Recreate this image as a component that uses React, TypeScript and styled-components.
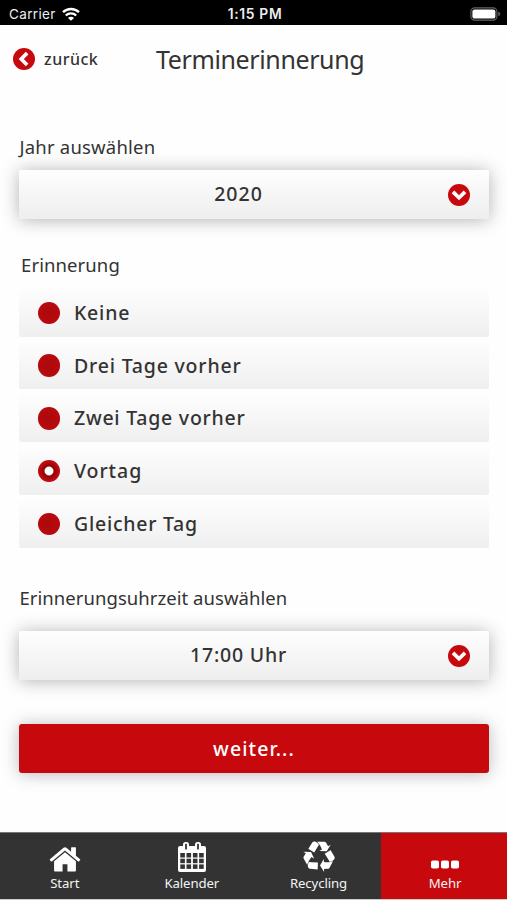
import React from "react";
import styled, { createGlobalStyle } from "styled-components";

const RED = "#c7090e";

const GlobalStyle = createGlobalStyle`
  * { box-sizing: border-box; }
  body { margin: 0; background: #fefefe; }
`;

const Screen = styled.div`
  width: 507px;
  height: 900px;
  display: flex;
  flex-direction: column;
  overflow: hidden;
  background: #fefefe;
  color: #333;
  font-family: "Noto Sans", "Open Sans", sans-serif;
`;

const StatusBar = styled.header`
  height: 25px;
  flex: none;
  display: grid;
  grid-template-columns: 1fr auto 1fr;
  align-items: center;
  padding: 2px 6px 0 9px;
  background: #000;
  color: #eee;
  font-family: Inter, sans-serif;
  font-size: 13.5px;
  line-height: 20px;
`;

const Carrier = styled.div`
  display: flex;
  align-items: center;
  gap: 6px;
  letter-spacing: 0.35px;
`;

const Clock = styled.div`
  font-weight: 600;
  font-size: 13.8px;
  letter-spacing: 0.7px;
`;

const BatterySlot = styled.div`
  display: flex;
  justify-content: flex-end;
`;

const TitleBar = styled.div`
  height: 68px;
  flex: none;
  display: flex;
  align-items: center;
  padding-left: 13px;
`;

const BackButton = styled.button`
  width: 143px;
  display: flex;
  align-items: center;
  gap: 9px;
  padding: 0;
  border: 0;
  background: none;
  color: inherit;
  font: 500 16px/22px "Noto Sans", sans-serif;
  letter-spacing: 0.5px;
`;

const Title = styled.h1`
  margin: 0;
  padding-bottom: 1px;
  font-size: 25px;
  font-weight: 400;
  line-height: 34px;
  letter-spacing: -0.38px;
  white-space: nowrap;
`;

const Content = styled.main`
  flex: 1;
  padding: 41px 18px 0 19px;
`;

const Label = styled.div<{ $space: number }>`
  height: 26px;
  padding-left: 0.5px;
  font-size: 18.5px;
  line-height: 26px;
  letter-spacing: ${(p) => p.$space}px;
  white-space: nowrap;
`;

const GroupLabel = styled(Label)`
  margin-top: 33.5px;
  padding-left: 2px;
`;

const Select = styled.button<{ $top: number; $space: number }>`
  width: 470px;
  height: 49px;
  margin-top: ${(p) => p.$top}px;
  display: grid;
  grid-template-columns: 1fr 22px;
  align-items: center;
  padding: 1px 19px 0 0;
  border: 0;
  border-radius: 2px;
  background: linear-gradient(#fefefe, #eee);
  box-shadow: 0 1px 18px rgba(0, 0, 0, 0.3);
  color: inherit;
  font: 500 19.5px/26px "Noto Sans", sans-serif;
  letter-spacing: ${(p) => p.$space}px;
`;

const SelectValue = styled.span`
  padding: 0 0 1px 10px;
  text-align: center;
`;

const Options = styled.div`
  display: grid;
  grid-template-rows: repeat(5, 49.5px);
  row-gap: 3.25px;
  margin: 8.75px 0 37.5px;
`;

const Option = styled.label`
  display: flex;
  align-items: center;
  gap: 14px;
  padding: 2px 0 0 18.5px;
  border-radius: 2px;
  background: linear-gradient(#fefefe, #efefef);
`;

const OptionText = styled.span<{ $space: number }>`
  font-size: 19.5px;
  font-weight: 500;
  line-height: 26px;
  letter-spacing: ${(p) => p.$space}px;
`;

const Radio = styled.span<{ $checked: boolean }>`
  width: 22.5px;
  height: 22.5px;
  flex: none;
  border-radius: 50%;
  background: ${(p) =>
    p.$checked
      ? "radial-gradient(circle, #fff 0 3.8px, #8d0508 5px, #a9070b 7.5px, #c00a0e 9.5px)"
      : "radial-gradient(circle at 45% 50%, #ac080c, #b70a0e 65%, #c50c10)"};
`;

const Submit = styled.button`
  width: 470px;
  height: 49px;
  margin-top: 44.5px;
  padding: 0;
  border: 0;
  border-radius: 3px;
  background: ${RED};
  box-shadow: 0 1px 17px rgba(0, 0, 0, 0.27);
  color: #fff;
  font: 500 19.5px/26px "Noto Sans", sans-serif;
  letter-spacing: 1.1px;
`;

const TabBar = styled.nav`
  height: 68px;
  flex: none;
  display: grid;
  grid-template-columns: 127px 127px 126.5px 126.5px;
  border-top: 1px solid #777;
  border-bottom: 1.5px solid #ccc;
`;

const Tab = styled.a<{ $active?: boolean }>`
  display: flex;
  flex-direction: column;
  align-items: center;
  padding: 7px 0 0 2.5px;
  background: ${(p) => (p.$active ? RED : "#333")};
  color: #f4f4f4;
`;

const TabIcon = styled.span`
  height: 33px;
  display: flex;
  align-items: center;
`;

const TabText = styled.span`
  font-size: 13.2px;
  line-height: 20px;
  letter-spacing: -0.1px;
`;

const ChevronDisc = ({ back = false }: { back?: boolean }) => (
  <svg width="22" height="22" viewBox="0 0 22 22">
    <circle cx="11" cy="11" r="11" fill={RED} />
    <path
      d={back ? "M12.8 6.4 8.3 11l4.5 4.6" : "M6.3 9.1 11 13.7l4.7-4.6"}
      fill="none"
      stroke="#fff"
      strokeWidth="3.7"
      strokeLinecap="square"
    />
  </svg>
);

const WifiIcon = () => (
  <svg width="18" height="14" viewBox="0 0 18 14" fill="none" stroke="#fff" strokeWidth="2.4">
    <path d="M1 5.2a11.5 11.5 0 0 1 16 0M3.8 8.5a7.4 7.4 0 0 1 10.4 0" />
    <path d="M9 13.8 6 10.9a4.2 4.2 0 0 1 6 0z" fill="#fff" stroke="none" />
  </svg>
);

const BatteryIcon = () => (
  <svg width="31" height="14" viewBox="0 0 31 14">
    <rect x=".9" y=".9" width="26" height="12.2" rx="3.8" fill="none" stroke="#666" strokeWidth="1.1" />
    <rect x="2.4" y="2.4" width="23" height="9.2" rx="2.2" fill="#fff" />
    <path d="M28.3 4.8q2 .6 2 2.2t-2 2.2z" fill="#666" />
  </svg>
);

const HomeIcon = () => (
  <svg width="34" height="34" viewBox="0 -130 1792 1792" fill="#fff">
    <path d="M1472 992v480q0 26-19 45t-45 19h-384v-384h-256v384h-384q-26 0-45-19t-19-45v-480q0-1 .5-3t.5-3l575-474 575 474q1 2 1 6zm223-69l-62 74q-8 9-21 11h-3q-13 0-21-7l-692-577-692 577q-12 8-24 7-13-2-21-11l-62-74q-8-10-7-23.5t11-21.5l719-599q32-26 76-26t76 26l244 204v-195q0-14 9-23t23-9h192q14 0 23 9t9 23v408l219 182q10 8 11 21.5t-7 23.5z" />
  </svg>
);

const CalendarIcon = () => (
  <svg width="28" height="30" viewBox="0 0 28 30">
    <rect x="0" y="4" width="28" height="26" rx="2" fill="#fff" />
    {[11, 16.7, 22.4].map((y) =>
      [2.3, 8.5, 14.9, 21.1].map((x) => (
        <rect key={`${x}-${y}`} x={x} y={y} width="4.6" height="4.5" fill="#333" />
      )),
    )}
    {[8, 20].map((x) => (
      <g key={x}>
        <rect x={x - 3} y="0" width="6" height="9" rx="2.5" fill="#fff" />
        <rect x={x - 0.9} y="1.8" width="1.8" height="5.8" rx=".6" fill="#333" />
      </g>
    ))}
  </svg>
);

const RecycleIcon = () => (
  <svg width="32" height="32" viewBox="0 -30 1792 1792" fill="#fff">
    <path d="M836 1169l-15 368-2 22-420-29q-36-3-67-31.5t-47-65.5q-11-27-14.5-55t4-65 12-55 21.5-64 19-53q78 12 509 28zm-387-586l180 379-147-92q-63 72-111.5 144.5t-72.5 125-39.5 94.5-18.5 63l-4 21-190-357q-17-26-18-56t6-47l8-18q35-63 114-188l-140-86zm1231 517l-188 359q-12 29-36.5 46.5t-43.5 20.5l-18 4q-71 7-219 12l8 164-230-367 211-362 7 173q170 16 283 5t170-33zm-785-924q-47 63-265 435l-317-187-19-12 225-356q20-31 60-45t80-10q24 2 48.5 12t42 21 41.5 33 36 34.5 36 39.5 32 35zm655 307l212 363q18 37 12.5 76t-27.5 74q-13 20-33 37t-38 28-48.5 22-47 16-51.5 14-46 12q-34-72-265-436l313-195zm-143-226l142-83-220 373-419-20 151-86q-34-89-75-166t-75.5-123.5-64.5-80-47-46.5l-17-13 405 1q31-3 58 10.5t39 28.5l11 15q39 61 112 190z" />
  </svg>
);

const MoreIcon = () => (
  <svg width="28" height="33" viewBox="0 0 28 33" fill="#fff">
    <rect x="0" y="20.5" width="8" height="8" rx="1.8" />
    <rect x="10" y="20.5" width="8" height="8" rx="1.8" />
    <rect x="20" y="20.5" width="8" height="8" rx="1.8" />
  </svg>
);

const options = [
  { text: "Keine", space: 0.8 },
  { text: "Drei Tage vorher", space: 0.8 },
  { text: "Zwei Tage vorher", space: 0.75 },
  { text: "Vortag", space: 0.95, checked: true },
  { text: "Gleicher Tag", space: 0.75 },
];

const tabs = [
  { text: "Start", Icon: HomeIcon },
  { text: "Kalender", Icon: CalendarIcon },
  { text: "Recycling", Icon: RecycleIcon },
  { text: "Mehr", Icon: MoreIcon, active: true },
];

export default function App() {
  return (
    <>
      <GlobalStyle />
      <Screen>
        <StatusBar>
          <Carrier>
            Carrier <WifiIcon />
          </Carrier>
          <Clock>1:15 PM</Clock>
          <BatterySlot>
            <BatteryIcon />
          </BatterySlot>
        </StatusBar>
        <TitleBar>
          <BackButton>
            <ChevronDisc back />
            zurück
          </BackButton>
          <Title>Terminerinnerung</Title>
        </TitleBar>
        <Content>
          <Label $space={0.2}>Jahr auswählen</Label>
          <Select $top={9.75} $space={1}>
            <SelectValue>2020</SelectValue>
            <ChevronDisc />
          </Select>
          <GroupLabel $space={0.1}>Erinnerung</GroupLabel>
          <Options>
            {options.map((o) => (
              <Option key={o.text}>
                <Radio $checked={!!o.checked} />
                <OptionText $space={o.space}>{o.text}</OptionText>
              </Option>
            ))}
          </Options>
          <Label $space={0.05}>Erinnerungsuhrzeit auswählen</Label>
          <Select $top={19.5} $space={0.8}>
            <SelectValue>17:00 Uhr</SelectValue>
            <ChevronDisc />
          </Select>
          <Submit>weiter...</Submit>
        </Content>
        <TabBar>
          {tabs.map(({ text, Icon, active }) => (
            <Tab key={text} $active={active}>
              <TabIcon>
                <Icon />
              </TabIcon>
              <TabText>{text}</TabText>
            </Tab>
          ))}
        </TabBar>
      </Screen>
    </>
  );
}
